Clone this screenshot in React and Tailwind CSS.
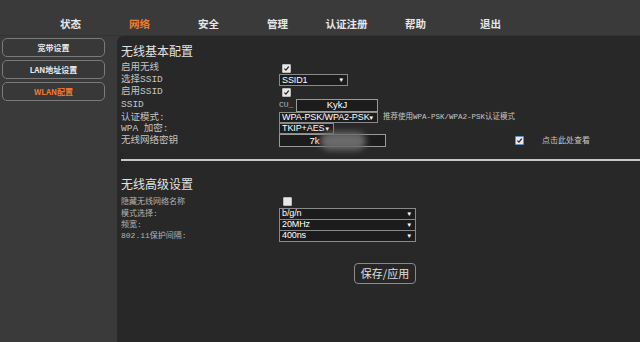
import React from "react";

const navItems = ["状态", "网络", "安全", "管理", "认证注册", "帮助", "退出"];
const sideItems = ["宽带设置", "LAN地址设置", "WLAN配置"];

const labelFont = { fontFamily: '"Liberation Mono","Noto Sans CJK SC",monospace' };

const Check = ({ checked, blue }) => (
    <span
        className={`flex items-center justify-center w-[9px] h-[9px] rounded-[1px] bg-[#e8e8e8] border ${blue ? "border-[#6b8fc7]" : "border-[#bbb]"}`}
    >
        {checked && (
            <svg viewBox="0 0 10 10" className="w-[7px] h-[7px]">
                <path d="M2 5.2 L4.2 7.4 L8.2 2.4" fill="none" stroke="#222" strokeWidth="1.8" />
            </svg>
        )}
    </span>
);

const Select = ({ value, w, h = "h-[12px]" }) => (
    <div
        className={`${w} ${h} flex items-center justify-between bg-[#1c1c1c] border border-[#8a8a8a] pl-[2px] pr-[3px] text-[9px] tracking-[-0.1px] text-white leading-none whitespace-nowrap overflow-hidden font-['Liberation_Sans',sans-serif]`}
    >
        <span className="min-w-0">{value}</span>
        <span className="shrink-0 text-[6px] ml-[2px]">▼</span>
    </div>
);

const Row = ({ label, h, small, children }) => (
    <div className={`flex items-center ${h}`}>
        <div
            className={`w-[158px] ${small ? "text-[8px] text-[#b4b4b4]" : "text-[9.5px] text-[#c4c4c4]"} leading-none whitespace-nowrap`}
            style={labelFont}
        >
            {label}
        </div>
        <div className="flex items-center">{children}</div>
    </div>
);

export default function App() {
    return (
        <div className="w-[640px] h-[342px] bg-[#3a3a3b] flex flex-col overflow-hidden leading-none font-['Noto_Sans_CJK_SC',sans-serif]">
            <nav className="h-[36px] flex items-start pt-[17px] pl-[36px] border-b border-[#333]">
                {navItems.map((item, i) => (
                    <div
                        key={item}
                        className={`w-[69px] text-center text-[10.5px] font-bold leading-[14px] ${i === 1 ? "text-[#ee7a2c]" : "text-[#e6e6e6]"} ${i === 6 ? "ml-[6px]" : ""}`}
                    >
                        {item}
                    </div>
                ))}
            </nav>

            <div className="flex flex-1">
                <aside className="w-[117px] pt-[2px] pl-[2px] flex flex-col gap-[3px]">
                    {sideItems.map((item, i) => (
                        <div
                            key={item}
                            className={`w-[103px] h-[19px] flex items-center justify-center rounded-[5px] border border-[#7a7a7a] bg-[#383838] text-[8px] font-bold ${i === 2 ? "text-[#ee7a2c]" : "text-[#e8e8e8]"}`}
                        >
                            {item}
                        </div>
                    ))}
                </aside>

                <main className="flex-1 bg-[#282828] rounded-tl-[6px] pl-[4px] pt-[7px] text-[#ddd]">
                    <h2 className="h-[19px] text-[12px] leading-[16px] text-[#e2e2e2]">无线基本配置</h2>
                    <Row label="启用无线" h="h-[12px]">
                        <span className="flex ml-[3px]"><Check checked /></span>
                    </Row>
                    <Row label="选择SSID" h="h-[12px]">
                        <Select value="SSID1" w="w-[69px]" />
                    </Row>
                    <Row label="启用SSID" h="h-[12px]">
                        <span className="flex ml-[3px]"><Check checked /></span>
                    </Row>
                    <Row label="SSID" h="h-[14px]">
                        <span className="w-[17px] text-[8px] text-[#bbb]" style={labelFont}>CU_</span>
                        <div className="w-[82px] h-[13px] flex items-center justify-center bg-[#1c1c1c] border border-[#9a9a9a] text-[9.5px] text-white font-['Liberation_Sans',sans-serif]">
                            KykJ
                        </div>
                    </Row>
                    <Row label="认证模式:" h="h-[11px]">
                        <Select value="WPA-PSK/WPA2-PSK" w="w-[99px]" h="h-[11px]" />
                        <span className="ml-[5px] text-[7.5px] text-[#c4c4c4] whitespace-nowrap" style={labelFont}>
                            推荐使用WPA-PSK/WPA2-PSK认证模式
                        </span>
                    </Row>
                    <Row label="WPA 加密:" h="h-[11px]">
                        <Select value="TKIP+AES" w="w-[55px]" h="h-[11px]" />
                    </Row>
                    <Row label="无线网络密钥" h="h-[13px]">
                        <div className="relative w-[107px] h-[13px] flex items-center justify-center bg-[#1c1c1c] border border-[#9a9a9a] text-[9.5px] text-white font-['Liberation_Sans',sans-serif]">
                            <span className="mr-[36px]">7k</span>
                            <span className="absolute left-[40px] top-[-3px] w-[46px] h-[18px] rounded-full bg-[#6a6a6a] blur-[3px]" />
                        </div>
                        <span className="flex ml-[129px]"><Check checked blue /></span>
                        <span className="ml-[18px] text-[8px] text-[#c4c4c4]" style={labelFont}>点击此处查看</span>
                    </Row>

                    <div className="mt-[12px] h-[2px] bg-[#c8c8c8]" />

                    <h2 className="mt-[15px] h-[19px] text-[12px] leading-[16px] text-[#e2e2e2]">无线高级设置</h2>
                    <Row label="隐藏无线网络名称" h="h-[13px]" small>
                        <span className="flex ml-[4px]"><Check /></span>
                    </Row>
                    <Row label="模式选择:" h="h-[11px]" small>
                        <Select value="b/g/n" w="w-[137px]" />
                    </Row>
                    <Row label="频宽:" h="h-[11px]" small>
                        <Select value="20MHz" w="w-[137px]" />
                    </Row>
                    <Row label="802.11保护间隔:" h="h-[11px]" small>
                        <Select value="400ns" w="w-[137px]" />
                    </Row>

                    <div className="mt-[22px] pl-[233px]">
                        <button className="w-[62px] h-[21px] rounded-[4px] border border-[#8a8a8a] bg-[#262626] text-[11px] text-[#e0e0e0]">
                            保存/应用
                        </button>
                    </div>
                </main>
            </div>
        </div>
    );
}
